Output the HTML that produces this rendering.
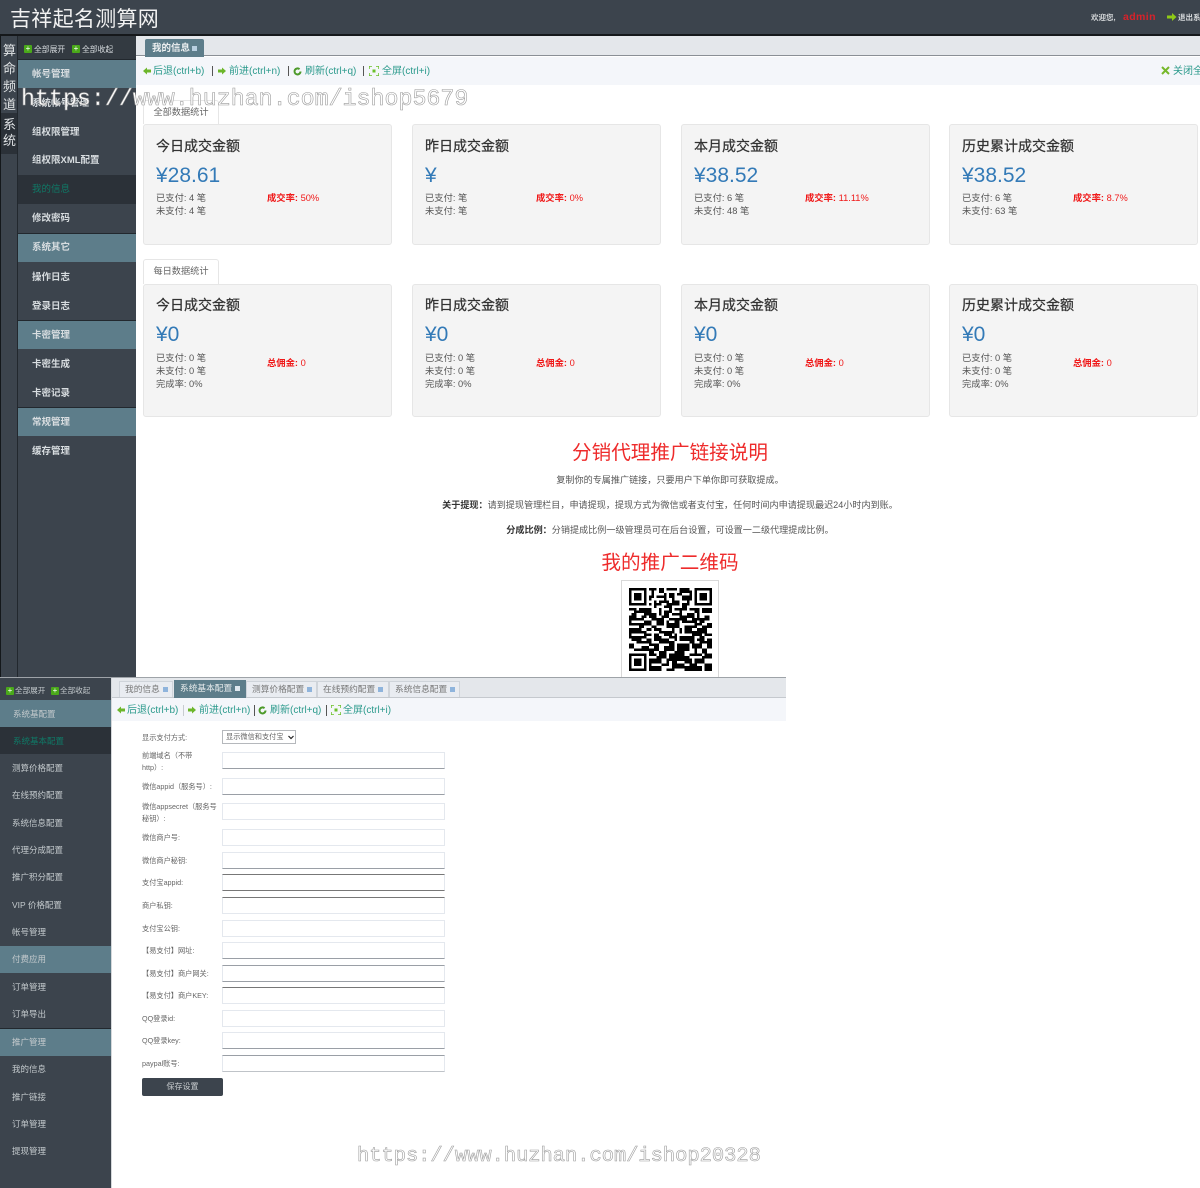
<!DOCTYPE html>
<html lang="zh"><head><meta charset="utf-8"><title>吉祥起名测算网</title>
<style>
*{box-sizing:border-box}
html,body{margin:0;padding:0;background:#fff}
body{width:1200px;height:1188px;position:relative;overflow:hidden;font-family:"Liberation Sans","Noto Sans CJK SC",sans-serif;color:#444}
#w{position:absolute;left:0;top:0;width:1200px;height:1188px;filter:blur(.35px);overflow:hidden}
.a{position:absolute}
.card>*{position:absolute}
.t{white-space:nowrap;line-height:1}
.bar{left:18px;width:118px;height:29px;background:#5d7d8a;border-top:1px solid #22282e}
.it{white-space:nowrap;font-size:9.5px;line-height:1;color:#d8dde0;font-weight:bold}
.card{background:#f4f4f4;border:1px solid #e6e6e6;border-radius:3px;width:249px}
.card .h{left:12px;font-size:14px;color:#333;line-height:1;white-space:nowrap;-webkit-text-stroke:.25px #333}
.card .m{left:12px;font-size:21px;color:#337ab7;line-height:1;white-space:nowrap}
.card .l{left:12px;font-size:9.3px;line-height:13px;color:#555;white-space:pre}
.card .r{left:123px;font-size:9.3px;line-height:1;color:#f01818;white-space:nowrap}
.card .r b{font-weight:bold}
.ctab{background:#fff;border:1px solid #e6e6e6;border-bottom:0;border-radius:3px 3px 0 0;font-size:9.2px;color:#666;text-align:center;line-height:22px}
.c{left:136px;width:1068px;text-align:center;white-space:nowrap;line-height:1}
.tb{font-size:10px;color:#2b9a8c;white-space:nowrap;line-height:1}
.tb2{font-size:10px;color:#2b9a8c;white-space:nowrap;line-height:1}
.sq{width:8px;height:8px;background:#4aa91a;border-radius:1px;color:#fff;font-size:8px;line-height:8px;text-align:center}
.s2{left:12px;white-space:nowrap;font-size:8.5px;line-height:1;color:#c4cacd}
.lb{left:142px;white-space:nowrap;font-size:7.2px;line-height:11px;color:#666}
.in{left:222px;width:223px;background:#fff;border:1px solid #e4e8ee;border-bottom:1px solid #9a9fa6}
.wm{font-family:"Liberation Mono",monospace;white-space:nowrap;line-height:1;color:#fff;-webkit-text-stroke:.6px #9c9c9c}
.tab2{top:681px;height:16px;background:#e9ecf1;border:1px solid #cfd4da;border-bottom:0;font-size:8.7px;line-height:15px;color:#777;padding-left:5px;white-space:nowrap}
.x{display:inline-block;width:5px;height:5px;background:#8fb4dc;margin-left:3px;vertical-align:0}
</style></head><body><div id="w">
<div class="a" style="left:0;top:0;width:1200px;height:34px;background:#3c444d"></div>
<div class="a" style="left:0;top:34px;width:1200px;height:2px;background:#15181b"></div>
<div class="a t" style="left:10px;top:9px;font-size:21px;color:#f2f2f2;letter-spacing:.3px">吉祥起名测算网</div>
<div class="a t" style="left:1091px;top:14px;font-size:7.5px;color:#d5d8da;font-weight:bold">欢迎您,</div>
<div class="a t" style="left:1123px;top:12px;font-size:10.5px;color:#d8222a;font-weight:bold;letter-spacing:.4px">admin</div>
<svg class="a" style="left:1167px;top:12px" width="10" height="10"><path d="M0 3.500h5V1l4.500 4-4.500 4V6.500H0z" fill="#8fca16"/></svg>
<div class="a t" style="left:1178px;top:14px;font-size:7.5px;color:#d5d8da;font-weight:bold">退出系统</div>

<div class="a" style="left:0;top:36px;width:136px;height:641px;background:#3c444d"></div>
<div class="a" style="left:0;top:36px;width:1px;height:641px;background:#14181b"></div>
<div class="a" style="left:17px;top:36px;width:1px;height:641px;background:#22282e"></div>
<div class="a" style="left:1px;top:113px;width:16px;height:41px;background:#2b3138"></div>
<div class="a" style="left:3px;top:42px;width:13px;font-size:13px;line-height:18px;color:#dfe2e4">算命频道</div>
<div class="a" style="left:3px;top:117px;width:13px;font-size:13px;line-height:16px;color:#dfe2e4">系统</div>

<div class="a" style="left:18px;top:36px;width:118px;height:24px;background:#333a41"></div>
<div class="a sq" style="left:24px;top:45px">+</div><div class="a it" style="left:34px;top:46px;font-size:7.800px;font-weight:normal">全部展开</div>
<div class="a sq" style="left:72px;top:45px">+</div><div class="a it" style="left:82px;top:46px;font-size:7.800px;font-weight:normal">全部收起</div>

<div class="a bar" style="top:59px"></div>
<div class="a it" style="left:32px;top:70px">帐号管理</div>
<div class="a it" style="left:32px;top:99px">系统帐号管理</div>
<div class="a it" style="left:32px;top:128px">组权限管理</div>
<div class="a it" style="left:32px;top:156px">组权限XML配置</div>
<div class="a" style="left:18px;top:175px;width:118px;height:29px;background:#2b3138"></div>
<div class="a it" style="left:32px;top:185px;color:#0f7a67;font-weight:normal">我的信息</div>
<div class="a it" style="left:32px;top:214px">修改密码</div>
<div class="a bar" style="top:233px"></div>
<div class="a it" style="left:32px;top:243px">系统其它</div>
<div class="a it" style="left:32px;top:273px">操作日志</div>
<div class="a it" style="left:32px;top:302px">登录日志</div>
<div class="a bar" style="top:320px"></div>
<div class="a it" style="left:32px;top:331px">卡密管理</div>
<div class="a it" style="left:32px;top:360px">卡密生成</div>
<div class="a it" style="left:32px;top:389px">卡密记录</div>
<div class="a bar" style="top:407px"></div>
<div class="a it" style="left:32px;top:418px">常规管理</div>
<div class="a it" style="left:32px;top:447px">缓存管理</div>

<div class="a" style="left:136px;top:36px;width:1064px;height:20px;background:#e4e7eb;border-bottom:1px solid #8a8f96"></div>
<div class="a" style="left:145px;top:39px;width:59px;height:18px;background:#5d7d8a;border-radius:2px 2px 0 0"></div>
<div class="a t" style="left:152px;top:44px;font-size:9.500px;color:#eef1f2;font-weight:bold">我的信息<span style="display:inline-block;width:5px;height:5px;background:#b9cfe0;margin-left:2px"></span></div>
<div class="a" style="left:136px;top:57px;width:1064px;height:28px;background:#f4f6fa"></div>

<svg class="a" style="left:143px;top:67px" width="8" height="8"><path d="M0 4l4-3.500v2h4v3H4v2z" fill="#6cb62a"/></svg>
<div class="a tb" style="left:153px;top:67px">后退(ctrl+b)</div>
<div class="a" style="left:212px;top:66px;width:1px;height:10px;background:#555"></div>
<svg class="a" style="left:218px;top:67px" width="8" height="8"><path d="M8 4L4 .5v2H0v3h4v2z" fill="#6cb62a"/></svg>
<div class="a tb" style="left:229px;top:67px">前进(ctrl+n)</div>
<div class="a" style="left:288px;top:66px;width:1px;height:10px;background:#555"></div>
<svg class="a" style="left:293px;top:67px" width="9" height="9"><path d="M7.500 4.500a3 3 0 1 1-1-2.300" fill="none" stroke="#4d9a2a" stroke-width="2"/></svg>
<div class="a tb" style="left:305px;top:67px">刷新(ctrl+q)</div>
<div class="a" style="left:363px;top:66px;width:1px;height:10px;background:#555"></div>
<svg class="a" style="left:369px;top:66px" width="10" height="10"><path d="M0 3V0h3M7 0h3v3M10 7v3H7M3 10H0V7" fill="none" stroke="#6cc02a" stroke-width="1.500"/><rect x="3.500" y="3.500" width="3" height="3" fill="#6cc02a"/></svg>
<div class="a tb" style="left:382px;top:67px">全屏(ctrl+i)</div>
<svg class="a" style="left:1161px;top:66px" width="9" height="9"><path d="M1 1l7 7M8 1L1 8" stroke="#76b82a" stroke-width="2"/></svg>
<div class="a tb" style="left:1173px;top:67px">关闭全屏</div>

<div class="a ctab" style="left:143px;top:100px;width:76px;height:24px">全部数据统计</div>
<div class="a card" style="left:143px;top:124px;height:121px"><div class="h" style="top:14px">今日成交金额</div><div class="m" style="top:40px">¥28.61</div><div class="l" style="top:67px">已支付: 4 笔
未支付: 4 笔</div><div class="r" style="top:69px"><b>成交率:</b> 50%</div></div>
<div class="a card" style="left:412px;top:124px;height:121px"><div class="h" style="top:14px">昨日成交金额</div><div class="m" style="top:40px">¥</div><div class="l" style="top:67px">已支付: 笔
未支付: 笔</div><div class="r" style="top:69px"><b>成交率:</b> 0%</div></div>
<div class="a card" style="left:681px;top:124px;height:121px"><div class="h" style="top:14px">本月成交金额</div><div class="m" style="top:40px">¥38.52</div><div class="l" style="top:67px">已支付: 6 笔
未支付: 48 笔</div><div class="r" style="top:69px"><b>成交率:</b> 11.11%</div></div>
<div class="a card" style="left:949px;top:124px;height:121px"><div class="h" style="top:14px">历史累计成交金额</div><div class="m" style="top:40px">¥38.52</div><div class="l" style="top:67px">已支付: 6 笔
未支付: 63 笔</div><div class="r" style="top:69px"><b>成交率:</b> 8.7%</div></div>

<div class="a ctab" style="left:143px;top:259px;width:76px;height:25px">每日数据统计</div>
<div class="a card" style="left:143px;top:284px;height:133px"><div class="h" style="top:13px">今日成交金额</div><div class="m" style="top:39px">¥0</div><div class="l" style="top:67px">已支付: 0 笔
未支付: 0 笔
完成率: 0%</div><div class="r" style="top:74px"><b>总佣金:</b> 0</div></div>
<div class="a card" style="left:412px;top:284px;height:133px"><div class="h" style="top:13px">昨日成交金额</div><div class="m" style="top:39px">¥0</div><div class="l" style="top:67px">已支付: 0 笔
未支付: 0 笔
完成率: 0%</div><div class="r" style="top:74px"><b>总佣金:</b> 0</div></div>
<div class="a card" style="left:681px;top:284px;height:133px"><div class="h" style="top:13px">本月成交金额</div><div class="m" style="top:39px">¥0</div><div class="l" style="top:67px">已支付: 0 笔
未支付: 0 笔
完成率: 0%</div><div class="r" style="top:74px"><b>总佣金:</b> 0</div></div>
<div class="a card" style="left:949px;top:284px;height:133px"><div class="h" style="top:13px">历史累计成交金额</div><div class="m" style="top:39px">¥0</div><div class="l" style="top:67px">已支付: 0 笔
未支付: 0 笔
完成率: 0%</div><div class="r" style="top:74px"><b>总佣金:</b> 0</div></div>

<div class="a c" style="top:444px;font-size:19.600px;color:#ee2b2b">分销代理推广链接说明</div>
<div class="a c" style="top:476px;font-size:9.100px;color:#555">复制你的专属推广链接，只要用户下单你即可获取提成。</div>
<div class="a c" style="top:501px;font-size:9.100px;color:#555"><b style="color:#333">关于提现：</b>请到提现管理栏目，申请提现，提现方式为微信或者支付宝，任何时间内申请提现最迟24小时内到账。</div>
<div class="a c" style="top:526px;font-size:9.100px;color:#555"><b style="color:#333">分成比例：</b>分销提成比例一级管理员可在后台设置，可设置一二级代理提成比例。</div>
<div class="a c" style="top:554px;font-size:19.600px;color:#ee2b2b">我的推广二维码</div>

<div class="a" style="left:621px;top:580px;width:98px;height:98px;background:#fff;border:1px solid #d8d8d8;border-bottom:0"></div>
<svg class="a" style="left:629px;top:588px" width="83" height="83" viewBox="0 0 33 33" shape-rendering="crispEdges">
<path fill="#000" d="M0 0h7v7H0zM1 1v5h5V1zM2 2h3v3H2zM26 0h7v7h-7zM27 1v5h5V1zM28 2h3v3h-3zM0 26h7v7H0zM1 27v5h5v-5zM2 28h3v3H2z" fill-rule="evenodd"/>
<path fill="#000" d="M8 0h3v1H8zM12 0h2v2h-2zM15 0h4v1h-4zM20 0h4v2h-4zM9 1h1v3H9zM16 2h2v2h-2zM19 2h2v1h-2zM8 3h1v2H8zM11 3h3v1h-3zM21 3h3v2h-3zM12 5h4v1h-4zM10 5h1v3h-1zM18 5h2v2h-2zM8 6h1v1H8zM14 7h3v1h-3zM21 6h2v3h-2zM24 8h4v1h-4zM29 8h4v2h-4zM0 8h3v1H0zM4 8h4v2H4zM12 8h1v3h-1zM18 8h2v1h-2zM1 10h2v3H1zM5 11h2v1H5zM9 10h2v2H9zM14 9h2v3h-2zM17 10h4v1h-4zM23 10h3v2h-3zM27 10h1v3h-1zM30 11h2v2h-2zM0 14h4v1H0zM6 13h3v2H6zM11 12h2v3h-2zM15 13h1v3h-1zM18 12h2v4h-2zM21 13h4v1h-4zM26 14h3v1h-3zM31 14h2v2h-2zM2 16h3v2H2zM7 16h2v1H7zM10 16h3v1h-3zM14 17h3v2h-3zM20 16h1v2h-1zM22 15h3v3h-3zM27 16h2v3h-2zM0 18h1v2H0zM6 18h3v1H6zM10 18h2v3h-2zM18 18h1v3h-1zM30 18h3v1h-3zM3 19h2v3H3zM7 20h2v2H7zM13 20h3v2h-3zM20 19h6v2h-6zM27 20h3v1h-3zM31 20h2v4h-2zM0 22h2v2H0zM5 23h3v2H5zM10 22h2v3h-2zM14 23h4v2h-4zM19 22h5v3h-5zM25 22h4v2h-4zM8 26h3v1H8zM13 25h2v3h-2zM16 26h6v3h-6zM24 26h5v1h-5zM30 26h3v2h-3zM9 28h2v2H9zM24 28h1v5h-1zM26 28h3v2h-3zM8 31h4v2H8zM13 30h3v1h-3zM15 32h3v1h-3zM19 30h3v2h-3zM27 31h2v2h-2zM30 30h3v3h-3zM26 23h1v3h-1z"/>
<path fill="#000" d="M14 2h1v3h-1zM24 1h1v4h-1zM17 4h1v3h-1zM11 6h2v1h-2zM15 6h2v1h-2zM23 5h1v2h-1zM8 8h1v4H8zM16 8h1v2h-1zM2 9h2v1H2zM20 8h1v2h-1zM26 9h2v1h-2zM6 9h2v2H6zM0 11h1v3H0zM3 12h3v1H3zM9 12h2v1H9zM13 11h1v4h-1zM16 12h2v1h-2zM20 11h3v2h-3zM25 12h2v2h-2zM28 12h2v2h-2zM4 14h2v2H4zM9 15h2v1H9zM16 14h2v2h-2zM25 15h2v1h-2zM29 15h2v3h-2zM0 16h2v2H0zM5 17h2v1H5zM12 17h2v1h-2zM17 16h1v2h-1zM25 17h2v2h-2zM1 19h2v2H1zM5 19h2v1H5zM12 19h1v3h-1zM16 19h2v1h-2zM26 18h1v1h-1zM28 19h2v1h-2zM5 21h2v1H5zM8 22h2v1H8zM16 21h2v2h-2zM24 21h2v1h-2zM28 21h3v1h-3zM2 24h3v1H2zM8 24h2v2H8zM12 25h1v2h-1zM18 25h4v1h-4zM29 24h2v2h-2zM8 28h1v3H8zM11 27h2v3h-2zM15 28h1v2h-1zM22 27h2v3h-2zM29 27h1v3h-1zM12 31h1v2h-1zM17 29h2v3h-2zM22 31h2v2h-2zM25 30h2v3h-2z"/>
</svg>

<!-- lower screenshot -->
<div class="a" style="left:0;top:677px;width:112px;height:511px;background:#3c444d;border-right:1px solid #d5d8db"></div>
<div class="a" style="left:0;top:677px;width:786px;height:1px;background:#9ea3a8"></div>
<div class="a sq" style="left:6px;top:687px">+</div><div class="a s2" style="left:15px;top:687px;font-size:7.600px">全部展开</div>
<div class="a sq" style="left:51px;top:687px">+</div><div class="a s2" style="left:60px;top:687px;font-size:7.600px">全部收起</div>
<div class="a" style="left:0;top:700px;width:111px;height:27px;background:#5d7d8a"></div>
<div class="a s2" style="left:13px;top:710px">系统基配置</div>
<div class="a" style="left:0;top:727px;width:111px;height:27px;background:#2b3138"></div>
<div class="a s2" style="left:13px;top:737px;color:#0f7a67">系统基本配置</div>
<div class="a s2" style="top:764px">测算价格配置</div>
<div class="a s2" style="top:791px">在线预约配置</div>
<div class="a s2" style="top:819px">系统信息配置</div>
<div class="a s2" style="top:846px">代理分成配置</div>
<div class="a s2" style="top:873px">推广积分配置</div>
<div class="a s2" style="top:901px">VIP 价格配置</div>
<div class="a s2" style="top:928px">帐号管理</div>
<div class="a" style="left:0;top:946px;width:111px;height:27px;background:#5d7d8a"></div>
<div class="a s2" style="top:955px">付费应用</div>
<div class="a s2" style="top:983px">订单管理</div>
<div class="a s2" style="top:1010px">订单导出</div>
<div class="a" style="left:0;top:1028px;width:111px;height:28px;background:#5d7d8a;border-top:1px solid #22282e"></div>
<div class="a s2" style="top:1038px">推广管理</div>
<div class="a s2" style="top:1065px">我的信息</div>
<div class="a s2" style="top:1093px">推广链接</div>
<div class="a s2" style="top:1120px">订单管理</div>
<div class="a s2" style="top:1147px">提现管理</div>

<div class="a" style="left:112px;top:678px;width:674px;height:20px;background:#e4e7eb;border-bottom:1px solid #c5c9ce"></div>
<div class="a tab2" style="left:119px;width:54px">我的信息<span class="x"></span></div>
<div class="a tab2" style="left:174px;width:72px;top:680px;height:18px;background:#5d7d8a;color:#e8eced;border:0;line-height:17px;padding-left:6px">系统基本配置<span class="x" style="background:#dfe8ee"></span></div>
<div class="a tab2" style="left:246px;width:71px">测算价格配置<span class="x"></span></div>
<div class="a tab2" style="left:317px;width:72px">在线预约配置<span class="x"></span></div>
<div class="a tab2" style="left:389px;width:71px">系统信息配置<span class="x"></span></div>
<div class="a" style="left:112px;top:698px;width:674px;height:23px;background:#f4f6fa"></div>
<svg class="a" style="left:117px;top:706px" width="8" height="8"><path d="M0 4l4-3.500v2h4v3H4v2z" fill="#6cb62a"/></svg>
<div class="a tb2" style="left:127px;top:706px">后退(ctrl+b)</div>
<div class="a" style="left:183px;top:705px;width:1px;height:11px;background:#c8ccd0"></div>
<svg class="a" style="left:188px;top:706px" width="8" height="8"><path d="M8 4L4 .5v2H0v3h4v2z" fill="#6cb62a"/></svg>
<div class="a tb2" style="left:199px;top:706px">前进(ctrl+n)</div>
<div class="a" style="left:254px;top:705px;width:1px;height:11px;background:#555"></div>
<svg class="a" style="left:258px;top:706px" width="9" height="9"><path d="M7.500 4.500a3 3 0 1 1-1-2.300" fill="none" stroke="#4d9a2a" stroke-width="2"/></svg>
<div class="a tb2" style="left:270px;top:706px">刷新(ctrl+q)</div>
<div class="a" style="left:326px;top:705px;width:1px;height:11px;background:#555"></div>
<svg class="a" style="left:331px;top:705px" width="10" height="10"><path d="M0 3V0h3M7 0h3v3M10 7v3H7M3 10H0V7" fill="none" stroke="#6cc02a" stroke-width="1.500"/><rect x="3.500" y="3.500" width="3" height="3" fill="#6cc02a"/></svg>
<div class="a tb2" style="left:343px;top:706px">全屏(ctrl+i)</div>

<div class="a lb" style="top:732px">显示支付方式:</div>
<div class="a" style="left:222px;top:730px;width:74px;height:14px;background:#fff;border:1px solid #b5b8bc;font-size:7.200px;line-height:12px;padding-left:3px;color:#666;white-space:nowrap">显示微信和支付宝<svg class="a" style="left:65px;top:4px" width="6" height="5"><path d="M.5 1l2.500 2.500L5.500 1" fill="none" stroke="#222" stroke-width="1.200"/></svg></div>
<div class="a lb" style="top:750px;line-height:12px">前端域名（不带<br>http）:</div><div class="a in" style="top:752px;height:17px"></div>
<div class="a lb" style="top:781px">微信appid（服务号）:</div><div class="a in" style="top:778px;height:17px"></div>
<div class="a lb" style="top:801px;line-height:12px">微信appsecret（服务号<br>秘钥）:</div><div class="a in" style="top:803px;height:17px;border-bottom-color:#e4e8ee"></div>
<div class="a lb" style="top:832px">微信商户号:</div><div class="a in" style="top:829px;height:17px;border-bottom-color:#e4e8ee"></div>
<div class="a lb" style="top:855px">微信商户秘钥:</div><div class="a in" style="top:852px;height:17px"></div>
<div class="a lb" style="top:877px">支付宝appid:</div><div class="a in" style="top:874px;height:17px;border-top-color:#777;border-bottom-color:#777"></div>
<div class="a lb" style="top:900px">商户私钥:</div><div class="a in" style="top:897px;height:17px;border-top-color:#777;border-bottom-color:#e4e8ee"></div>
<div class="a lb" style="top:923px">支付宝公钥:</div><div class="a in" style="top:920px;height:17px;border-bottom-color:#e4e8ee"></div>
<div class="a lb" style="top:945px">【易支付】网址:</div><div class="a in" style="top:942px;height:17px"></div>
<div class="a lb" style="top:968px">【易支付】商户网关:</div><div class="a in" style="top:965px;height:17px;border-top-color:#9a9fa6"></div>
<div class="a lb" style="top:990px">【易支付】商户KEY:</div><div class="a in" style="top:987px;height:17px;border-top-color:#777;border-bottom-color:#e4e8ee"></div>
<div class="a lb" style="top:1013px">QQ登录id:</div><div class="a in" style="top:1010px;height:17px;border-bottom-color:#e4e8ee"></div>
<div class="a lb" style="top:1035px">QQ登录key:</div><div class="a in" style="top:1032px;height:17px"></div>
<div class="a lb" style="top:1058px">paypal账号:</div><div class="a in" style="top:1055px;height:17px;border-top-color:#9a9fa6;border-bottom-color:#bfc3c8"></div>
<div class="a" style="left:142px;top:1078px;width:81px;height:18px;background:#3c444d;border-radius:2px;color:#c9cdd0;font-size:8px;text-align:center;line-height:18px">保存设置</div>

<div class="a wm" style="left:21px;top:88px;font-size:23.300px">https://www.huzhan.com/ishop5679</div>
<div class="a wm" style="left:357px;top:1147px;font-size:20.400px">https://www.huzhan.com/ishop20328</div>
</div></body></html>
